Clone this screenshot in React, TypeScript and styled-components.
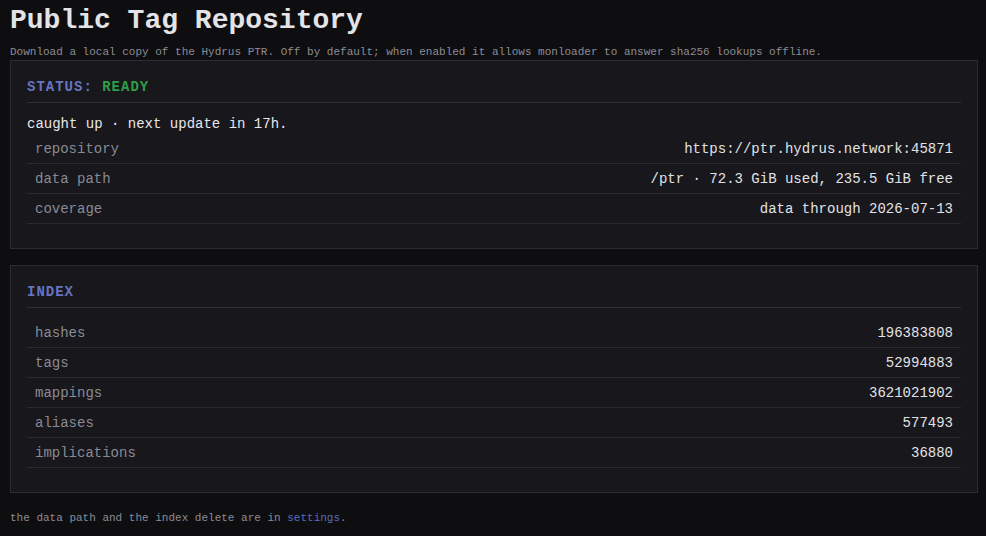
import React from "react";
import styled, { createGlobalStyle } from "styled-components";

const Global = createGlobalStyle`
  html, body { margin: 0; padding: 0; background: #0e0e10; }
  body { font-family: "Liberation Mono", "DejaVu Sans Mono", monospace; color: #e2e2e6; }
`;

const Page = styled.div`
  padding: 5px 8px 12px 10px;
`;

const Title = styled.h1`
  margin: 0;
  font-size: 28px;
  line-height: 32px;
  font-weight: 700;
  color: #e4e4e8;
`;

const Subtitle = styled.p`
  margin: 8px 0 1px;
  font-size: 11px;
  line-height: 14px;
  color: #8c8c96;
`;

const Card = styled.section`
  background: #17171c;
  border: 1px solid #2c2c33;
  padding: 16px;
  & + & { margin-top: 16px; }
`;

const Heading = styled.h2`
  margin: 0 0 10px;
  padding-bottom: 5px;
  border-bottom: 1px solid #2e2e35;
  font-size: 14px;
  line-height: 20px;
  font-weight: 700;
  letter-spacing: 1px;
  color: #6874c0;
`;

const Status = styled.span<{ $tone: "ok" | "bad" }>`
  color: ${(p) => (p.$tone === "ok" ? "#2f9e48" : "#d04545")};
`;

const Note = styled.p`
  margin: 0;
  padding-top: 1px;
  font-size: 14px;
  line-height: 20px;
  color: #e8e8ec;
`;

const Table = styled.div`
  display: flex;
  flex-direction: column;
  margin-bottom: 8px;
`;

const Row = styled.div`
  display: flex;
  justify-content: space-between;
  align-items: center;
  height: 29px;
  padding: 0 8px;
  border-bottom: 1px solid #2a2a31;
  font-size: 14px;
`;

const Label = styled.span`
  color: #8a8a94;
`;

const Value = styled.span`
  color: #e2e2e6;
`;

const Footer = styled.p`
  margin: 18px 0 0;
  font-size: 11px;
  line-height: 14px;
  color: #8c8c96;
`;

const Link = styled.a`
  color: #5c69b8;
  text-decoration: none;
`;

const info: [string, string][] = [
  ["repository", "https://ptr.hydrus.network:45871"],
  ["data path", "/ptr · 72.3 GiB used, 235.5 GiB free"],
  ["coverage", "data through 2026-07-13"],
];

const index: [string, string][] = [
  ["hashes", "196383808"],
  ["tags", "52994883"],
  ["mappings", "3621021902"],
  ["aliases", "577493"],
  ["implications", "36880"],
];

export default function App() {
  return (
    <Page>
      <Global />
      <Title>Public Tag Repository</Title>
      <Subtitle>
        Download a local copy of the Hydrus PTR. Off by default; when enabled it allows monloader to answer sha256 lookups offline.
      </Subtitle>
      <Card>
        <Heading>
          STATUS: <Status $tone="ok">READY</Status>
        </Heading>
        <Note>caught up · next update in 17h.</Note>
        <Table>
          {info.map(([k, v]) => (
            <Row key={k}>
              <Label>{k}</Label>
              <Value>{v}</Value>
            </Row>
          ))}
        </Table>
      </Card>
      <Card>
        <Heading>INDEX</Heading>
        <Table>
          {index.map(([k, v]) => (
            <Row key={k}>
              <Label>{k}</Label>
              <Value>{v}</Value>
            </Row>
          ))}
        </Table>
      </Card>
      <Footer>
        the data path and the index delete are in <Link href="#">settings</Link>.
      </Footer>
    </Page>
  );
}
